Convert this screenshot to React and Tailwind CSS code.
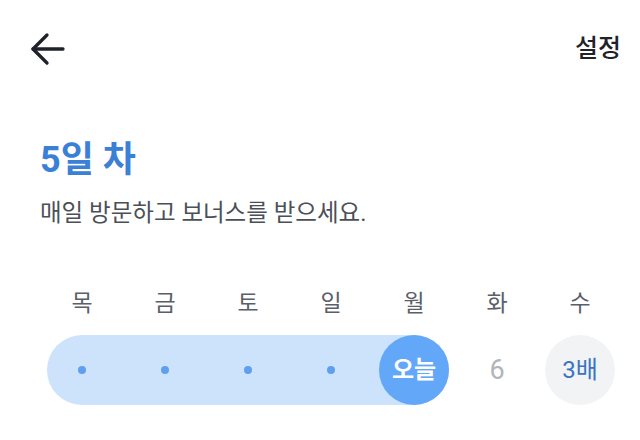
const font = { fontFamily: 'Roboto, "Noto Sans CJK KR", "Noto Sans", sans-serif' };

const days = ["목", "금", "토", "일", "월", "화", "수"];

function BackArrow() {
  return (
    <svg width="36" height="34" viewBox="0 0 36 34" fill="none" stroke="#1f2329" strokeWidth="3.3" strokeLinecap="round" strokeLinejoin="round">
      <path d="M4 17H34" />
      <path d="M18 3L4 17L18 31" />
    </svg>
  );
}

export default function App() {
  return (
    <div className="h-[440px] w-[640px] overflow-hidden bg-white" style={font}>
      <div className="flex h-[98px] items-center justify-between pl-[29px] pr-[19px]">
        <BackArrow />
        <span className="text-[25px] font-medium text-[#1f2329]">설정</span>
      </div>

      <div className="px-[40px]">
        <h1 className="mt-[42px] text-[36px] font-bold leading-[40px] text-[#3b80d7]">5일 차</h1>
        <p className="mt-[18px] text-[23.5px] leading-[30px] text-[#4b5058]">
          매일 방문하고 보너스를 받으세요.
        </p>
      </div>

      <div className="ml-[47px] mt-[61px] flex gap-[13px]">
        {days.map((d) => (
          <div key={d} className="w-[70px] text-center text-[23px] leading-[30px] text-[#5a6069]">
            {d}
          </div>
        ))}
      </div>

      <div className="ml-[47px] mt-[16px] flex gap-[13px]">
        <div className="flex gap-[13px] rounded-full bg-[#cce3fb]">
          {[0, 1, 2, 3].map((i) => (
            <div key={i} className="flex h-[70px] w-[70px] items-center justify-center">
              <span className="h-[8px] w-[8px] rounded-full bg-[#5f9ff0]" />
            </div>
          ))}
          <div className="flex h-[70px] w-[70px] items-center justify-center rounded-full bg-[#63a7f8] text-[24px] font-bold text-white">
            오늘
          </div>
        </div>
        <div className="flex h-[70px] w-[70px] items-center justify-center text-[27px] text-[#b1b5ba]">6</div>
        <div className="flex h-[70px] w-[70px] items-center justify-center rounded-full bg-[#f1f3f5] text-[24px] text-[#3a73c4]">
          3배
        </div>
      </div>
    </div>
  );
}
